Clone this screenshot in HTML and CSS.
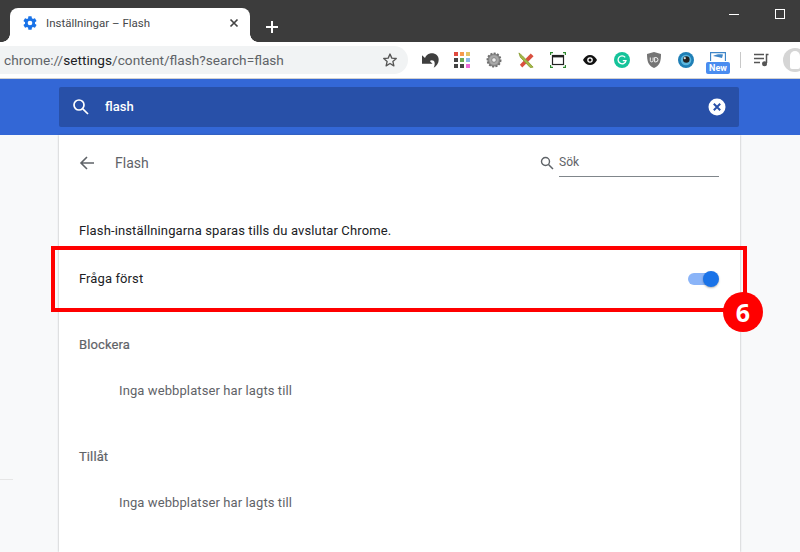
FILE: index.html
```html
<!DOCTYPE html>
<html lang="sv">
<head>
<meta charset="utf-8">
<title>Inställningar – Flash</title>
<link rel="stylesheet" href="styles.css">
</head>
<body>
<div class="titlebar">
  <div class="tab">
    <svg class="tab-icon" width="16" height="16" viewBox="0 0 24 24"><path fill="#1a73e8" d="M19.4 13c.04-.32.1-.66.1-1s-.06-.68-.1-1l2.1-1.650c.2-.15.25-.42.12-.64l-2-3.46c-.12-.22-.39-.3-.61-.22l-2.490 1c-.52-.4-1.080-.73-1.690-.98l-.38-2.650A.49.49 0 0 0 14 2h-4c-.25 0-.46.18-.49.42l-.38 2.650c-.61.25-1.170.59-1.690.98l-2.490-1c-.23-.09-.49 0-.61.22l-2 3.460c-.13.22-.07.49.12.64L4.570 11c-.04.32-.07.66-.07 1s.03.68.07 1l-2.110 1.650c-.19.15-.25.42-.12.64l2 3.460c.12.22.39.3.61.22l2.490-1c.52.4 1.080.73 1.690.98l.38 2.650c.03.24.24.42.49.42h4c.25 0 .46-.18.49-.42l.38-2.650c.61-.25 1.170-.59 1.690-.98l2.490 1c.23.09.49 0 .61-.22l2-3.460c.12-.22.07-.49-.12-.64L19.400 13zM12 15.500a3.500 3.500 0 1 1 0-7 3.500 3.500 0 0 1 0 7z"/></svg>
    <span class="tab-title">Inställningar – Flash</span>
    <svg class="tab-close" width="10" height="10" viewBox="0 0 10 10"><path d="M1.500 1.500l7 7M8.500 1.500l-7 7" stroke="#444" stroke-width="1.700" fill="none"/></svg>
  </div>
  <svg class="new-tab" width="14" height="14" viewBox="0 0 14 14"><path d="M7 1v12M1 7h12" stroke="#fff" stroke-width="2" fill="none"/></svg>
  <div class="window-controls">
    <span class="win-min"></span>
    <span class="win-max"></span>
  </div>
</div>

<div class="toolbar">
  <div class="omnibox">
    <span class="url">chrome://<b class="url-host">settings</b>/content/flash?search=flash</span>
    <svg class="star" width="16" height="16" viewBox="0 0 24 24"><path fill="none" stroke="#555" stroke-width="2" stroke-linejoin="round" d="M12 3l2.700 6.200 6.700.6-5.100 4.400 1.500 6.600L12 17.300l-5.800 3.500 1.500-6.600-5.100-4.400 6.700-.6z"/></svg>
  </div>
  <div class="extensions">
    <span class="ext"><svg width="17" height="15" viewBox="1 1 17 15"><path fill="#3f3f3f" d="M9 1.500c5-.8 8.700 2 8.700 6.200 0 3.400-1.900 6.100-5 8 1.300-2.600 1.400-5.700-.1-6.900-1.100-.9-2.600-.8-3.800.1l2.700 2.800H1V3.200l3 2.800C5 3.500 6.800 1.900 9 1.500z"/></svg></span>
    <span class="ext">
      <span class="grid-ext">
        <i class="c1"></i><i class="c2"></i><i class="c3"></i>
        <i class="c4"></i><i class="c5"></i><i class="c6"></i>
        <i class="c4"></i><i class="c4"></i><i class="c7"></i>
      </span>
    </span>
    <span class="ext"><svg width="16" height="16" viewBox="0 0 16 16"><circle cx="8" cy="8" r="6.600" fill="#8a8a8a" stroke="#6f6f6f" stroke-width="1.800" stroke-dasharray="2 1.400"/><circle cx="8" cy="8" r="4.800" fill="#a8a8a8"/><circle cx="8" cy="8" r="2.300" fill="#eee" stroke="#777" stroke-width=".8"/></svg></span>
    <span class="ext"><svg width="17" height="17" viewBox="0 0 18 18"><path d="M2 13.500L13.500 1.500l3 3L4.500 16.500z" fill="#d9503f"/><path d="M16 16L4.500 4 1 1l1.500 4.500L13 16.500z" fill="#a4b948" stroke="#8fa23c" stroke-width="1"/></svg></span>
    <span class="ext"><svg width="16" height="16" viewBox="0 0 16 16"><path d="M.5 3V.5H3M13 .5h2.500V3M.5 13v2.500H3M13 15.500h2.500V13" stroke="#2f8a2f" stroke-width="1.300" fill="none"/><rect x="2.500" y="3.500" width="11" height="9" fill="none" stroke="#222" stroke-width="1.200"/><path d="M2.500 4.500h11" stroke="#222" stroke-width="1.800"/></svg></span>
    <span class="ext"><svg width="14" height="10" viewBox="0 0 14 10"><path fill="#111" d="M7 0c3 0 5.500 2 7 5-1.500 3-4 5-7 5S1.500 8 0 5c1.500-3 4-5 7-5z"/><circle cx="7" cy="5" r="2.800" fill="#fff"/><circle cx="7" cy="5" r="1.500" fill="#111"/></svg></span>
    <span class="ext"><svg width="16" height="16" viewBox="0 0 16 16"><circle cx="8" cy="8" r="8" fill="#15c39a"/><path d="M11.200 5.300A4 4 0 1 0 12 8.600H8.800" fill="none" stroke="#fff" stroke-width="1.300"/></svg></span>
    <span class="ext"><svg width="14" height="16" viewBox="0 0 14 16"><path fill="#757575" d="M7 0l7 2c0 7-1 11.500-7 14C1 13.500 0 9 0 2z"/><path d="M3.300 5.500v3a1.400 1.400 0 0 0 2.800 0v-3M7.600 5.500v4.400h1.200a2.200 2.200 0 0 0 0-4.400z" fill="none" stroke="#fff" stroke-width=".9"/></svg></span>
    <span class="ext"><svg width="16" height="16" viewBox="0 0 16 16"><circle cx="8" cy="8" r="8" fill="#1f7fb6"/><circle cx="8" cy="8" r="5.300" fill="#5bb7df"/><circle cx="8.300" cy="7.500" r="3.300" fill="#222"/><circle cx="6.800" cy="6.200" r="1.100" fill="#ddd"/></svg></span>
    <span class="ext ext-new">
      <svg width="16" height="10" viewBox="0 0 16 10"><path d="M.5 9V.5h15V9" fill="none" stroke="#3f86c8" stroke-width="1.300"/><path d="M3 4c3-2 7-2 10-1.500L12 6 8 5z" fill="#3f86c8"/></svg>
      <span class="new-label">New</span>
    </span>
    <span class="ext-divider"></span>
    <span class="ext ext-media"><svg width="16" height="14" viewBox="0 0 16 14"><path d="M0 1.500h10M0 5.500h10M0 9.500h6" stroke="#555" stroke-width="1.500" fill="none"/><path d="M14.500 1.500H12.500V10" stroke="#555" stroke-width="1.500" fill="none"/><circle cx="10.500" cy="10.800" r="2.500" fill="#555"/></svg></span>
    <span class="avatar"><span class="avatar-inner"></span></span>
  </div>
</div>

<header class="header">
  <div class="searchbar">
    <svg class="search-icon" width="18" height="18" viewBox="0 0 18 18"><circle cx="7" cy="7" r="5" fill="none" stroke="#fff" stroke-width="1.700"/><path d="M10.800 10.800L16 16" stroke="#fff" stroke-width="1.700"/></svg>
    <span class="search-text">flash</span>
    <svg class="search-clear" width="18" height="18" viewBox="0 0 18 18"><circle cx="9" cy="9" r="8.500" fill="#fff"/><path d="M5.800 5.800l6.400 6.400M12.200 5.800l-6.400 6.400" stroke="#2850a8" stroke-width="2"/></svg>
  </div>
</header>

<main class="main">
  <aside class="side side-left"><span class="side-rule"></span></aside>
  <section class="card">
    <div class="card-head">
      <svg class="back" width="16" height="16" viewBox="0 0 16 16"><path d="M15 8H2M8 2L2 8l6 6" fill="none" stroke="#5f6368" stroke-width="1.600"/></svg>
      <h1 class="card-title">Flash</h1>
      <div class="subsearch">
        <svg width="14" height="14" viewBox="0 0 14 14"><circle cx="5.500" cy="5.500" r="4" fill="none" stroke="#5f6368" stroke-width="1.400"/><path d="M8.500 8.500L13 13" stroke="#5f6368" stroke-width="1.500"/></svg>
        <span class="subsearch-field">Sök</span>
      </div>
    </div>
    <p class="note">Flash-inställningarna sparas tills du avslutar Chrome.</p>
    <div class="row">
      <span class="row-label">Fråga först</span>
      <span class="toggle"><span class="toggle-knob"></span></span>
    </div>
    <h2 class="section">Blockera</h2>
    <p class="empty">Inga webbplatser har lagts till</p>
    <h2 class="section section-next">Tillåt</h2>
    <p class="empty">Inga webbplatser har lagts till</p>
  </section>
  <div class="highlight"></div>
  <div class="badge">6</div>
</main>
</body>
</html>
```
FILE: styles.css
```css
* { box-sizing: border-box; }
html, body { margin: 0; padding: 0; width: 800px; height: 552px; overflow: hidden; }
body { font-family: Roboto, "Liberation Sans", sans-serif; background: #f8f9fa; color: #202124; }

.titlebar { height: 42px; background: #3c3c3c; display: flex; align-items: flex-end; padding-left: 10px; position: relative; }
.tab { width: 240px; height: 34px; background: #fff; border-radius: 8px 8px 0 0; display: flex; align-items: center; padding: 0 10px 4px 13px; position: relative; }
.tab::before, .tab::after { content: ""; position: absolute; bottom: 0; width: 8px; height: 8px; background: radial-gradient(circle at 0 0, transparent 7.500px, #fff 8px); }
.tab::before { left: -8px; }
.tab::after { right: -8px; background: radial-gradient(circle at 100% 0, transparent 7.500px, #fff 8px); }
.tab-icon { flex: none; margin-left: -1px; }
.tab-title { margin-left: 8px; font-size: 11.5px; color: #45474a; flex: 1; white-space: nowrap; }
.tab-close { flex: none; margin-right: 1px; }
.new-tab { margin: 0 0 8px 15px; }
.window-controls { margin-left: auto; align-self: flex-start; display: flex; align-items: center; gap: 36px; padding-top: 9px; margin-right: 15px; }
.win-min { width: 10px; height: 1px; background: #fff; }
.win-max { width: 10px; height: 10px; border: 1px solid #fff; }

.toolbar { height: 37px; background: #fff; border-bottom: 1px solid #d0d0d0; display: flex; align-items: flex-start; padding-top: 4px; }
.omnibox { width: 408px; height: 28px; background: #f1f3f4; border-radius: 0 14px 14px 0; display: flex; align-items: center; padding: 0 10px 0 4px; }
.url { flex: 1; font-size: 13.66px; color: #5f6368; white-space: nowrap; }
.url-host { font-weight: 400; color: #202124; }
.star { flex: none; }
.extensions { display: flex; align-items: center; height: 28px; margin-left: 6px; flex: 1; overflow: hidden; }
.ext { width: 32px; height: 28px; flex: none; display: flex; align-items: center; justify-content: center; }
.grid-ext { width: 16px; height: 16px; display: grid; grid-template-columns: repeat(3, 4px); grid-auto-rows: 4px; gap: 2px; flex: none; }
.grid-ext i { display: block; }
.c1 { background: #e04a3f; }
.c2 { background: #f59a4d; }
.c3 { background: #e2c565; }
.c4 { background: #444; }
.c5 { background: #6cab57; }
.c6 { background: #8ab8e8; }
.c7 { background: #ec6ad8; }
.ext svg { flex: none; }
.ext-new { flex-direction: column; justify-content: flex-start; padding-top: 6px; }
.new-label { font-size: 9px; font-weight: 700; line-height: 12px; width: 24px; text-align: center; background: #4a8cf0; color: #fff; border-radius: 2px; }
.ext-divider { width: 1px; height: 16px; background: #c8c8c8; flex: none; margin-left: 6px; }
.ext-media { margin-left: 5px; }
.avatar { width: 24px; height: 24px; border-radius: 50%; background: #d5d5d5; flex: none; display: flex; align-items: center; justify-content: center; margin-left: 5px; }
.avatar-inner { width: 10px; height: 18px; background: #fff; border-radius: 5px 5px 2px 2px; }

.header { height: 56px; background: #3367d6; padding: 8px 61px 0 59px; }
.searchbar { height: 40px; background: #2850a8; border-radius: 2px; display: flex; align-items: center; padding: 0 13px 0 13px; }
.search-icon { flex: none; }
.search-text { flex: 1; margin-left: 15px; color: #fff; font-size: 13px; font-weight: 500; position: relative; top: -1px; }
.search-clear { flex: none; }

.main { display: flex; position: relative; height: 417px; }
.side { position: relative; }
.side-left { width: 59px; flex: none; }
.side-rule { position: absolute; left: 0; top: 344px; width: 13px; height: 1px; background: #e6e6e6; }
.card { width: 681px; flex: none; background: #fff; padding: 0 20px; box-shadow: 0 0 2px rgba(60, 64, 67, .4); }
.card-head { display: flex; align-items: center; height: 56px; }
.back { flex: none; }
.card-title { margin: 0 0 0 20px; font-size: 14px; font-weight: 400; color: #5f6368; flex: 1; }
.subsearch { display: flex; align-items: center; gap: 5px; height: 28px; margin-right: 1px; }
.subsearch-field { width: 160px; height: 28px; border-bottom: 1px solid #80868b; font-size: 12px; color: #5f6368; line-height: 26px; }
.note { margin: 30px 0 0; height: 19px; line-height: 19px; font-size: 13px; color: #202124; letter-spacing: .13px; }
.row { height: 48px; margin-top: 14px; display: flex; align-items: center; justify-content: space-between; }
.row-label { font-size: 13px; color: #202124; letter-spacing: .1px; }
.toggle { width: 28px; height: 12px; margin-top: 2px; margin-right: 4px; background: #8ab4f8; border-radius: 6px; position: relative; display: block; }
.toggle-knob { position: absolute; right: -3px; top: -2px; width: 16px; height: 16px; border-radius: 50%; background: #1a73e8; box-shadow: 0 1px 2px rgba(0, 0, 0, .3); }
.section { margin: 33px 0 0; height: 20px; line-height: 20px; font-size: 13px; font-weight: 400; color: #5f6368; letter-spacing: .1px; -webkit-text-stroke: .2px #5f6368; }
.section-next { margin-top: 44px; }
.empty { margin: 24px 0 0 40px; height: 24px; line-height: 24px; font-size: 13px; color: #5f6368; letter-spacing: .1px; }

.highlight { position: absolute; left: 51px; top: 111px; width: 696px; height: 66px; border: 4px solid #f00; }
.badge { position: absolute; left: 723px; top: 157px; width: 40px; height: 40px; border-radius: 50%; background: #f00; color: #fff; font-family: "Open Sans", sans-serif; font-weight: 700; font-size: 25px; line-height: 40px; text-align: center; }
```
